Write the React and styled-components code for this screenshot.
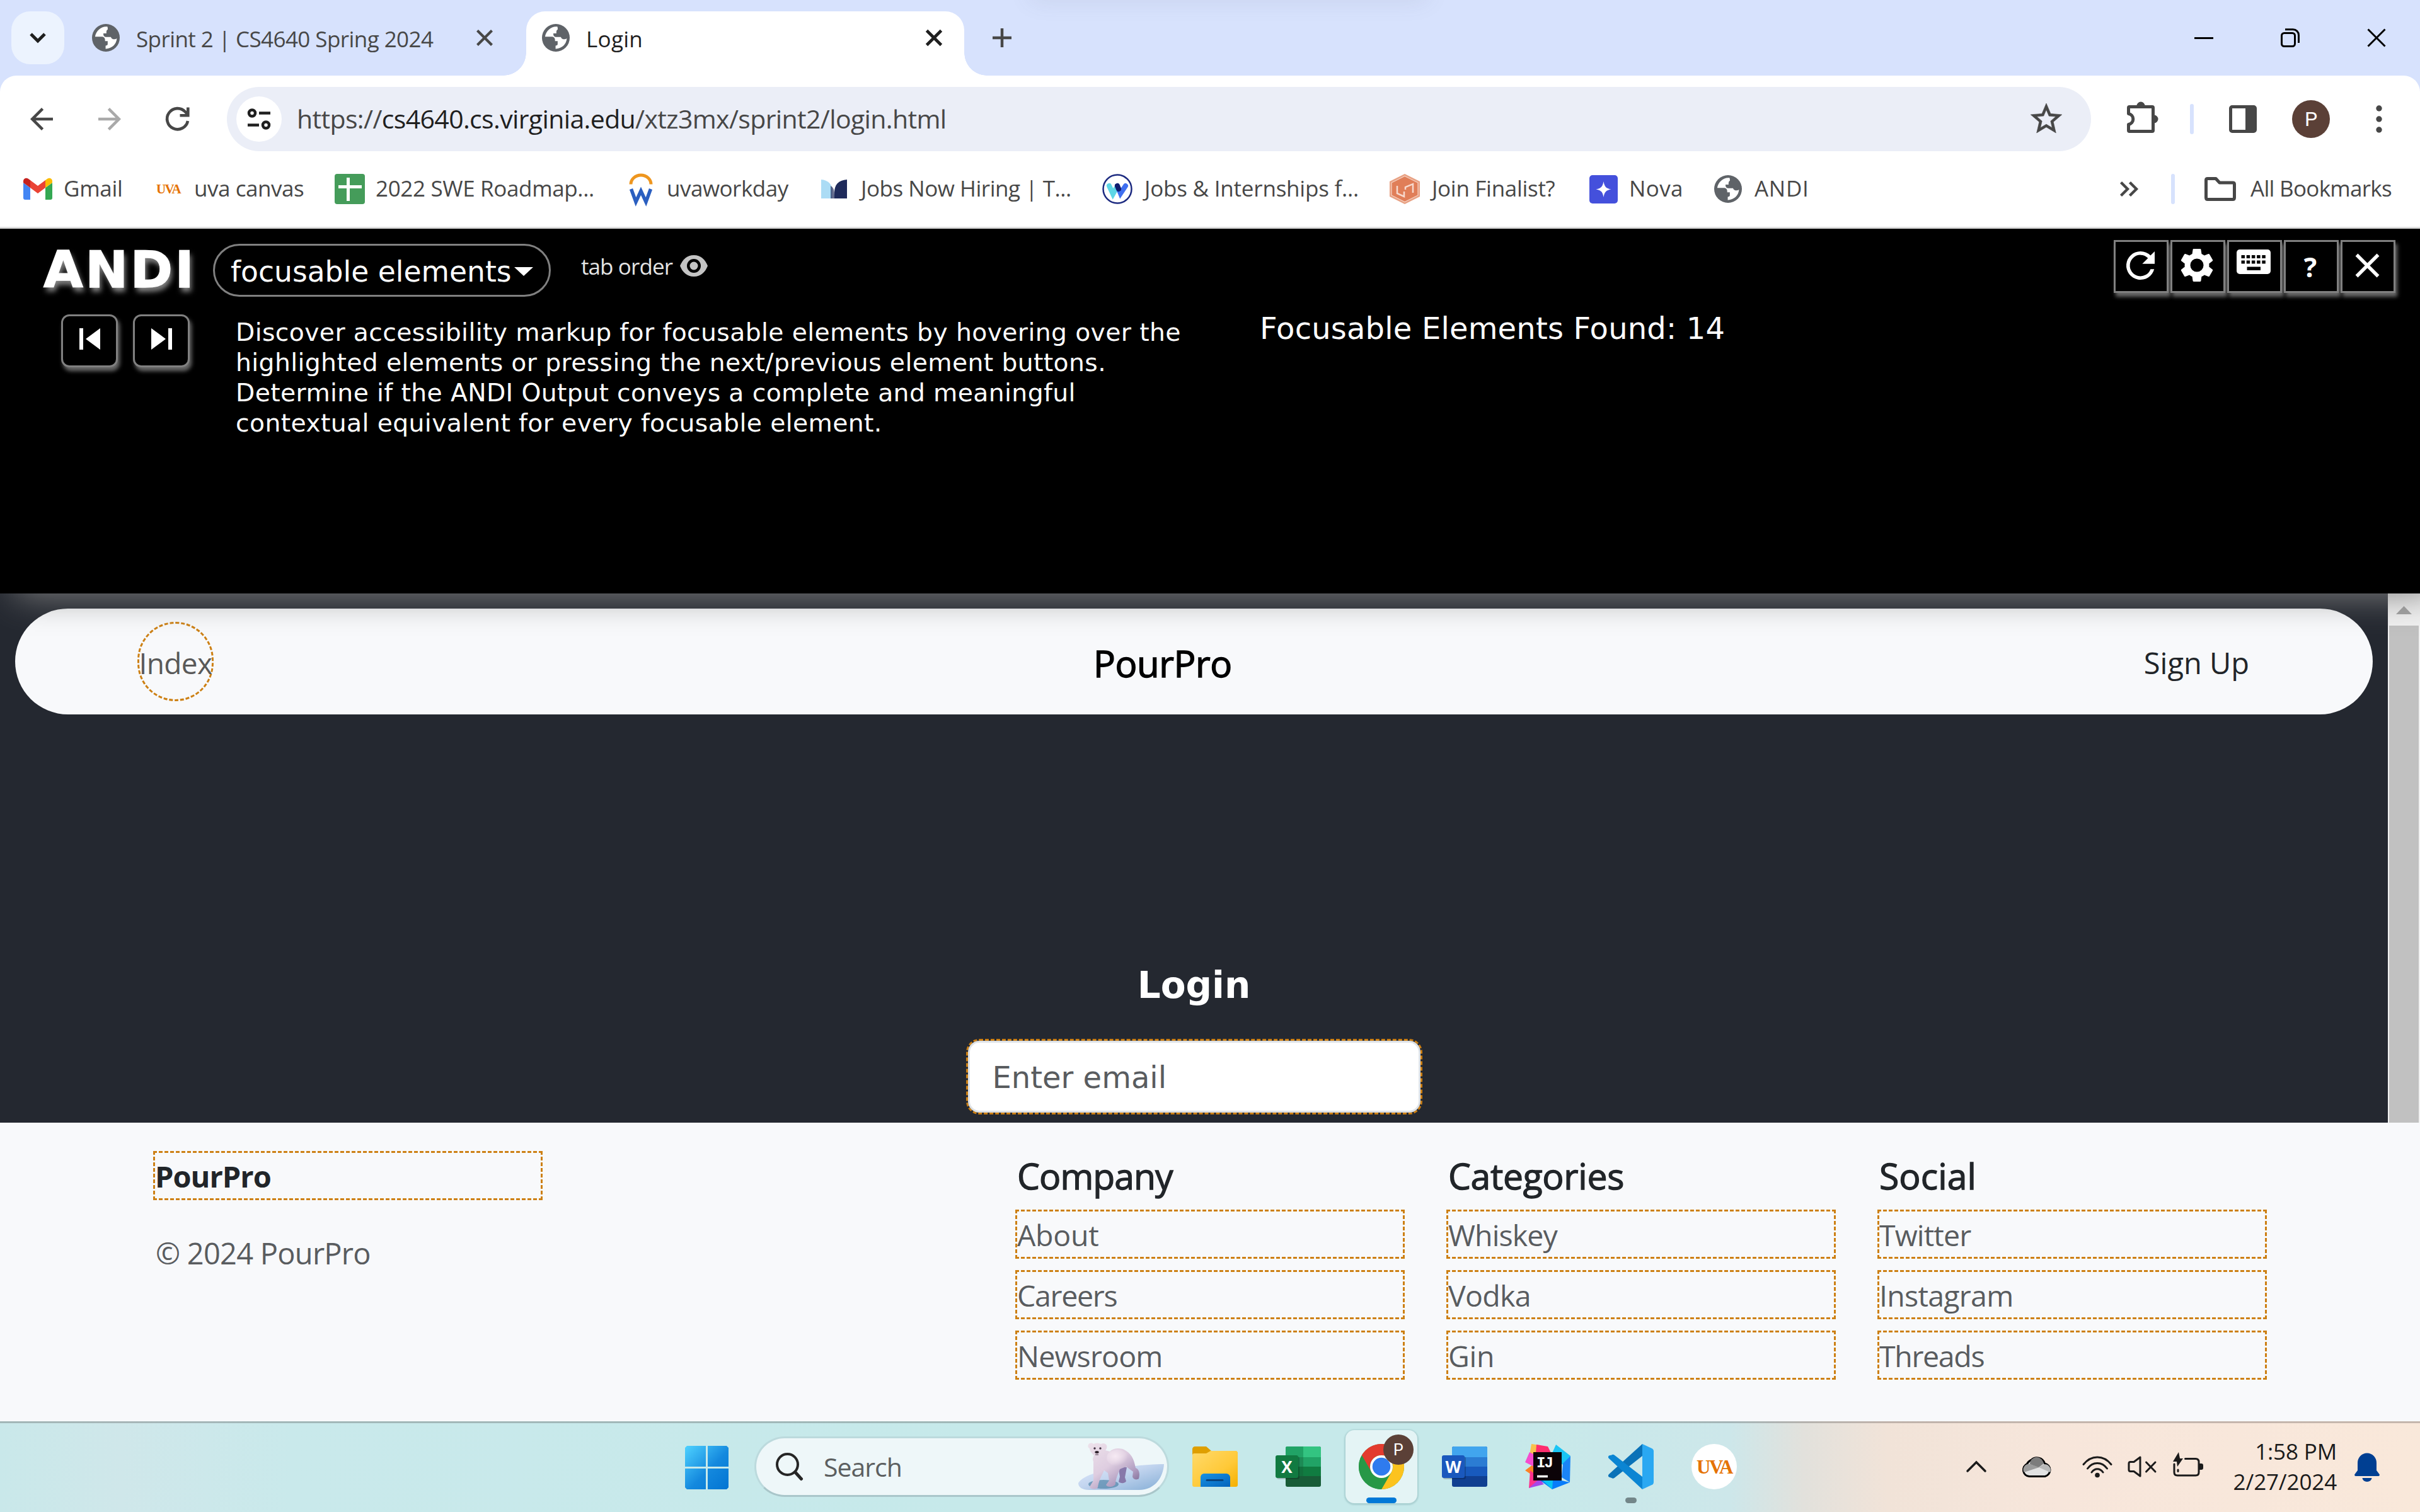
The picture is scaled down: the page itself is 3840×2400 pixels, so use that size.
import React from 'react';
import styled, { createGlobalStyle, css } from 'styled-components';

const UI = '"Open Sans", "Noto Sans", sans-serif';
const VERDANA = '"DejaVu Sans", sans-serif';
const ORANGE = '#cd8014';
const INK = '#474747';

const GlobalStyle = createGlobalStyle`
  *, *::before, *::after { box-sizing: border-box; }
  body { margin: 0; background: #f8f9fb; font-family: ${UI}; overflow: hidden; }
  a { color: inherit; text-decoration: none; }
  button { background: none; border: 0; padding: 0; margin: 0; color: inherit; font: inherit; }
`;

const Screen = styled.div`
  width: 3840px;
  height: 2400px;
  display: flex;
  flex-direction: column;
  overflow: hidden;
`;

const Svg = styled.svg`
  display: block;
  flex: none;
  width: ${(p) => p.$w}px;
  height: ${(p) => p.$h || p.$w}px;
  margin-left: ${(p) => p.$ml || 0}px;
  margin-top: ${(p) => p.$mt || 0}px;
  overflow: visible;
`;

/* ---------- browser chrome ---------- */

const TabStrip = styled.header`
  position: relative;
  height: 120px;
  flex: none;
  background: #d7e2fd;
  display: flex;
  align-items: flex-start;
  padding: 18px 54px 0 18px;
`;

const TopGlow = styled.span`
  position: absolute;
  left: 1640px;
  top: -24px;
  width: 620px;
  height: 20px;
  box-shadow: 0 0 36px 4px rgba(90, 90, 110, 0.13);
`;

const TabSearch = styled.button`
  width: 84px;
  height: 84px;
  border-radius: 30px;
  background: #ecf3fe;
  display: grid;
  place-items: center;
`;

const Tab = styled.div`
  position: relative;
  display: flex;
  align-items: center;
  width: ${(p) => p.$w}px;
  height: ${(p) => (p.$active ? 102 : 84)}px;
  padding: 0 ${(p) => p.$pr}px ${(p) => (p.$active ? 18 : 0)}px ${(p) => p.$pl}px;
  color: ${(p) => (p.$active ? '#1f1f1f' : INK)};
  ${(p) =>
    p.$active &&
    css`
      background: #fff;
      border-radius: 30px 30px 0 0;
      &::before,
      &::after {
        content: '';
        position: absolute;
        bottom: 0;
        width: 36px;
        height: 36px;
      }
      &::before {
        left: -36px;
        background: radial-gradient(circle at 0 0, transparent 35.5px, #fff 36px);
      }
      &::after {
        right: -36px;
        background: radial-gradient(circle at 100% 0, transparent 35.5px, #fff 36px);
      }
    `}
`;

const TabTitle = styled.span`
  flex: 1;
  margin-left: ${(p) => p.$ml}px;
  padding-top: 3px;
  font-size: 35px;
  line-height: 48px;
  letter-spacing: ${(p) => p.$ls}px;
  white-space: nowrap;
`;

const WindowButtons = styled.div`
  margin-left: auto;
  height: 84px;
  display: flex;
  align-items: center;
  gap: 107px;
`;

const ToolbarBack = styled.div`
  flex: none;
  background: #d7e2fd;
`;

const Toolbar = styled.div`
  height: 120px;
  background: #fff;
  border-radius: 26px 26px 0 0;
  display: flex;
  align-items: center;
  padding: 18px 0 0 48px;
  color: ${INK};
`;

const AddressBar = styled.div`
  width: 2958px;
  height: 102px;
  margin: 0 57px 0 59px;
  border-radius: 51px;
  background: #ebeef7;
  display: flex;
  align-items: center;
  padding: 0 46px 0 15px;
`;

const SiteInfo = styled.span`
  width: 72px;
  height: 72px;
  border-radius: 50%;
  background: #fff;
  display: grid;
  place-items: center;
`;

const Url = styled.span`
  flex: 1;
  margin-left: 24px;
  margin-top: -3px;
  font-size: 41px;
  line-height: 60px;
  letter-spacing: -0.63px;
  white-space: nowrap;
  b { font-weight: 400; color: #1f1f1f; }
`;

const Rule = styled.span`
  width: 6px;
  height: 48px;
  border-radius: 3px;
  background: #d7e2fd;
  margin-left: ${(p) => p.$ml}px;
`;

const Avatar = styled.span`
  width: ${(p) => p.$size}px;
  height: ${(p) => p.$size}px;
  margin-left: ${(p) => p.$ml || 0}px;
  border-radius: 50%;
  background: #5b4037;
  color: #fff;
  display: grid;
  place-items: center;
  font: ${(p) => p.$font}px/1 Roboto, sans-serif;
`;

const BookmarkBar = styled.nav`
  flex: none;
  height: 123px;
  background: #fff;
  border-bottom: 3px solid #dedede;
  display: flex;
  align-items: center;
  padding-left: 36px;
  color: ${INK};
`;

const Bookmark = styled.a`
  display: flex;
  align-items: center;
  width: ${(p) => p.$w}px;
`;

const BookmarkIcon = styled.span`
  width: 48px;
  height: 48px;
  display: grid;
  place-items: center;
`;

const BookmarkLabel = styled.span`
  margin-left: ${(p) => p.$ml || 17}px;
  margin-top: -2px;
  font-size: 35px;
  line-height: 48px;
  letter-spacing: ${(p) => p.$ls || 0}px;
  white-space: nowrap;
`;

const UvaMark = styled.span`
  font-family: "Liberation Serif", serif;
  font-weight: 700;
  font-size: ${(p) => p.$size}px;
  line-height: 1;
  letter-spacing: ${(p) => p.$ls}px;
  color: #e57200;
`;

/* ---------- ANDI panel ---------- */

const AndiPanel = styled.section`
  position: relative;
  z-index: 2;
  flex: none;
  height: 579px;
  background: #000;
  color: #fff;
  font-family: ${VERDANA};
  box-shadow: 24px 2px 54px #808080;
  clip-path: inset(0 0 -200px 0);
`;

const AndiTop = styled.div`
  display: flex;
  align-items: flex-start;
  height: 136px;
  padding: 18px 39px 0 69px;
`;

const AndiLogo = styled.h1`
  margin: 0;
  width: 269px;
  padding-top: 1px;
  font-size: 81px;
  line-height: 93px;
  font-weight: 700;
  letter-spacing: 3.6px;
  -webkit-text-stroke: 1.5px #fff;
  text-shadow: 3px 7px 9px #888;
`;

const ModuleSelect = styled.button`
  margin-top: 6px;
  width: 536px;
  height: 84px;
  border: 3px solid #808080;
  border-radius: 42px;
  display: flex;
  align-items: center;
  padding: 4px 0 0 25px;
  font-family: ${VERDANA};
  font-size: 45.6px;
  white-space: nowrap;
`;

const TabOrder = styled.span`
  margin: 17px 0 0 48px;
  display: flex;
  align-items: center;
  color: #e4e4e4;
  font-family: ${UI};
  font-size: 35px;
  line-height: 50px;
  letter-spacing: -0.9px;
`;

const AndiTools = styled.div`
  margin-left: auto;
  display: flex;
  gap: 3px;
`;

const AndiButton = styled.button`
  width: ${(p) => p.$w}px;
  height: 84px;
  border: 3px solid #808080;
  border-radius: ${(p) => p.$r || 0}px;
  box-shadow: 3px 6px 6px #6a6a6a;
  background: #000;
  display: flex;
  align-items: center;
  justify-content: center;
  padding-right: ${(p) => p.$pr || 0}px;
  font: 700 43px/1 ${UI};
`;

const AndiBody = styled.div`
  display: flex;
  align-items: flex-start;
  padding-left: 97px;
`;

const StepButtons = styled.div`
  display: flex;
  gap: 24px;
`;

const Instructions = styled.p`
  margin: 5px 0 0 73px;
  width: 1625px;
  font-size: 39.3px;
  line-height: 48px;
  letter-spacing: 0.38px;
  white-space: pre;
`;

const FoundCount = styled.p`
  margin: -6px 0 0;
  font-size: 48px;
  line-height: 56px;
  letter-spacing: 0.18px;
`;

/* ---------- web page ---------- */

const Page = styled.div`
  flex: none;
  height: 840px;
  display: flex;
`;

const Main = styled.main`
  flex: 1;
  background: #242830;
  padding: 24px 24px 0;
  display: flex;
  flex-direction: column;
  align-items: center;
`;

const NavBar = styled.nav`
  align-self: stretch;
  height: 168px;
  border-radius: 84px;
  background: #f8f9fb;
  display: flex;
  align-items: center;
  padding: 0 196px 0 194px;
  font-size: 47px;
  color: #212529;
`;

const IndexLink = styled.a`
  width: 121px;
  height: 126px;
  border: 3px dashed ${ORANGE};
  border-radius: 61px;
  display: flex;
  align-items: center;
  justify-content: center;
  padding-top: 4px;
  color: #595959;
  font-size: 46px;
  letter-spacing: -0.6px;
`;

const Brand = styled.span`
  margin: 5px auto 0 1396px;
  font-size: 58px;
  color: #000;
  letter-spacing: -0.4px;
  -webkit-text-stroke: 1.4px #000;
`;

const SignUp = styled.a`
  padding-top: 4px;
`;

const LoginTitle = styled.h2`
  margin: 391px 0 46px;
  font: 700 58px/78px ${VERDANA};
  color: #fff;
`;

const EmailField = styled.div`
  width: 724px;
  height: 120px;
  border: 3px dashed ${ORANGE};
  border-radius: 21px;
  flex: none;
`;

const EmailInput = styled.div`
  height: 100%;
  border: 3px solid #dee2e6;
  border-radius: 18px;
  background: #fff;
  padding: 2px 0 0 36px;
  display: flex;
  align-items: center;
  font-family: ${VERDANA};
  font-size: 48px;
  color: #595c5f;
`;

const Scrollbar = styled.div`
  width: 51px;
  background: #f1f1f1;
  padding: 20px 2px 0;
  display: flex;
  flex-direction: column;
  align-items: center;
`;

const ScrollThumb = styled.div`
  margin-top: 18px;
  flex: 1;
  align-self: stretch;
  background: #c1c1c1;
`;

const Footer = styled.footer`
  flex: none;
  height: 474px;
  background: #f8f9fb;
  padding: 45px 243px 0;
  display: grid;
  grid-template-columns: repeat(5, 618px);
  column-gap: 66px;
  align-items: start;
`;

const FooterColumn = styled.div`
  grid-column: ${(p) => p.$col};
  display: flex;
  flex-direction: column;
  gap: 18px;
`;

const FooterHeading = styled.h3`
  margin: 0 0 -3px;
  padding-left: 3px;
  font-size: 57px;
  line-height: 78px;
  font-weight: 400;
  letter-spacing: ${(p) => p.$ls}px;
  color: #212529;
  -webkit-text-stroke: 1.3px #212529;
`;

const FooterLink = styled.a`
  display: block;
  height: 78px;
  border: 3px dashed ${ORANGE};
  padding-top: 1px;
  font-size: ${(p) => (p.$strong ? 47 : 46.5)}px;
  line-height: 72px;
  font-weight: ${(p) => (p.$strong ? 700 : 400)};
  letter-spacing: ${(p) => (p.$strong ? -1 : p.$ls)}px;
  color: ${(p) => (p.$strong ? '#212529' : '#595c5f')};
`;

const Copyright = styled.p`
  margin: 30px 0 0 4px;
  font-size: 47px;
  line-height: 72px;
  letter-spacing: -0.75px;
  color: #595c5f;
`;

/* ---------- taskbar ---------- */

const Taskbar = styled.div`
  flex: none;
  height: 144px;
  border-top: 3px solid rgba(60, 50, 50, 0.27);
  background: linear-gradient(90deg, #c9e8ea 0, #cfe7ea 5%, #c9e9eb 12%, #c6e9ea 40%, #c6e9ea 62%, #cde7ea 71.5%, #e2e1dc 74.5%, #f1e3d8 78%, #f7e6db 85%, #f9e8da 100%);
  background-origin: border-box;
  display: flex;
  align-items: center;
  padding: 0 0 3px 1087px;
  color: #1b1b1b;
`;

const SearchBox = styled.div`
  width: 658px;
  height: 96px;
  margin: 0 16px 0 41px;
  border: 3px solid #bcdadd;
  border-bottom-color: #a9c6ca;
  border-radius: 48px;
  background: #eef7f9;
  display: flex;
  align-items: center;
  padding: 0 5px 0 31px;
  overflow: hidden;
`;

const SearchText = styled.span`
  flex: 1;
  margin-left: 33px;
  font-size: 41px;
  letter-spacing: -1px;
  color: #5c5f60;
`;

const Apps = styled.div`
  display: flex;
  gap: 18px;
`;

const AppSlot = styled.div`
  position: relative;
  width: 114px;
  height: 116px;
  border-radius: 14px;
  display: grid;
  place-items: center;
  ${(p) => p.$active && 'background: #e4f4f5; box-shadow: 0 1px 2px 2px rgba(90,140,145,.25);'}
`;

const Indicator = styled.span`
  position: absolute;
  bottom: 0;
  left: calc(50% - ${(p) => p.$w / 2}px);
  width: ${(p) => p.$w}px;
  height: 9px;
  border-radius: 5px;
  background: ${(p) => p.$c};
`;

const AppBadge = styled.span`
  position: absolute;
  top: 7px;
  right: 6px;
  display: flex;
`;

const UvaDisc = styled.span`
  width: 72px;
  height: 72px;
  border-radius: 50%;
  background: #fff;
  display: grid;
  place-items: center;
`;

const Clock = styled.div`
  width: 213px;
  text-align: right;
  font-size: 35px;
  line-height: 48px;
  padding-right: 1px;
  letter-spacing: -0.15px;
`;

const Tray = styled.div`
  margin-left: 343px;
  flex: none;
  display: flex;
  align-items: center;
`;

/* ---------- drawings ---------- */

const Globe = ({ size = 44, ...rest }) => (
  <Svg $w={size} viewBox="2 2 20 20" {...rest}>
    <circle cx="12" cy="12" r="10" fill="#5f6368" />
    <path
      fill="#fff"
      d="M13.2 4C8.9 3.4 4.9 6.8 4.2 11.2H8.8c1.7 0 2.6.8 2.6 2.3v.9h1.9v2.2c0 .9-.7 1-1.5 1.1v2.2c4.2.1 7.9-3.1 8.1-7.4-1.4.9-3.7.8-4.3-1.1h-3.4c-1.3 0-2.1-.9-2-2.6h2.2c-.1-1.9.3-2.4 1-2.8z"
    />
  </Svg>
);

const Cross = ({ size, sw, ...rest }) => (
  <Svg $w={size} viewBox={`0 0 ${size} ${size}`} fill="none" stroke="currentColor" strokeWidth={sw} {...rest}>
    <path d={`M1.5 1.5L${size - 1.5} ${size - 1.5}M${size - 1.5} 1.5L1.5 ${size - 1.5}`} />
  </Svg>
);

const ReloadIcon = (props) => (
  <Svg viewBox="4 4 16 16" fill="currentColor" {...props}>
    <path d="M17.65 6.35A7.96 7.96 0 0 0 12 4a8 8 0 1 0 7.73 10h-2.08A6 6 0 1 1 12 6c1.66 0 3.14.69 4.22 1.78L13 11h7V4l-2.35 2.35z" />
  </Svg>
);

const ChromeReload = () => (
  <Svg $w={38} $ml={71} viewBox="0 0 38 38" fill="none" stroke="currentColor" strokeWidth="4.6">
    <path d="M35 22A16.6 16.6 0 1 1 31 7.5L35 12" />
    <path d="M35.3 .5V13.200H22.500" />
  </Svg>
);

const GmailIcon = () => (
  <Svg $w={46} $h={34} viewBox="0 0 46 34">
    <path fill="#4285f4" d="M3 34h8V15L0 7v24c0 2 1 3 3 3z" />
    <path fill="#34a853" d="M35 34h8c2 0 3-1 3-3V7l-11 8z" />
    <path fill="#fbbc04" d="M35 3v12l11-8V4.500c0-4-4.500-6-7.500-4z" />
    <path fill="#ea4335" d="M11 15V3l12 9 12-9v12l-12 9z" />
    <path fill="#c5221f" d="M0 4.500V7l11 8V3L7.500.5C4.500-1.500 0 .5 0 4.500z" />
  </Svg>
);

const SheetIcon = () => (
  <Svg $w={48} viewBox="0 0 48 48">
    <rect width="48" height="48" rx="4" fill="#459c5a" />
    <path d="M21.500 6V43M6 20.500H43" stroke="#fff" strokeWidth="5" />
  </Svg>
);

const WorkdayIcon = () => (
  <Svg $w={38} $h={48} viewBox="0 0 38 48" fill="none">
    <path d="M3 16.500a16 14.500 0 0 1 32 0" stroke="#ee961f" strokeWidth="5" />
    <path d="M3.500 24L11 44.500 19 27l8 17.500L34.500 24" stroke="#2b5fc0" strokeWidth="5.500" />
  </Svg>
);

const HiringIcon = () => (
  <Svg $w={41} $h={30} viewBox="0 0 41 30">
    <path fill="#abdcf5" d="M0 0c11 1 17 7 17 16v14H0z" />
    <path fill="#1f2b5b" d="M41 0C27 1 21 9 21 20v10h20z" />
    <path fill="#1f2b5b" opacity=".7" d="M15 10c6 3 6 10 6 20h-6z" />
  </Svg>
);

const WayUpIcon = () => (
  <Svg $w={48} viewBox="0 0 48 48" fill="none" strokeLinecap="round">
    <circle cx="24" cy="24" r="22.500" stroke="#1c2a80" strokeWidth="2.500" fill="#fff" />
    <path d="M11 19l6 13 5-9" stroke="#5ed6e6" strokeWidth="8" />
    <path d="M24 19l5 12 8-12" stroke="#3f6ff0" strokeWidth="8" />
    <path d="M24 19l2 5" stroke="#101c6e" strokeWidth="8" />
  </Svg>
);

const FinalistIcon = () => (
  <Svg $w={48} viewBox="0 0 48 48" fill="none">
    <path d="M24 0L48 12V36L24 48 0 36V12z" fill="#e8a183" />
    <path d="M24 3.500L45 14V34L24 44.500 3 34V14z" fill="#e07e58" stroke="#f6d3c4" strokeWidth="1.200" />
    <path d="M12 19v12l11 5V28M25 25v-4l12-5v14" stroke="#f7d9cd" strokeWidth="2.500" />
  </Svg>
);

const NovaIcon = () => (
  <Svg $w={45} viewBox="0 0 45 45">
    <rect width="45" height="45" rx="5" fill="#4450dc" />
    <path fill="#fff" d="M22.500 10c1.500 8.500 4 11 12 12.500-8 1.500-10.500 4-12 12.500-1.500-8.500-4-11-12-12.500 8-1.500 10.500-4 12-12.500z" />
  </Svg>
);

const PolarBear = () => (
  <Svg $w={136} $h={76} viewBox="0 0 136 76">
    <defs>
      <linearGradient id="ice" x1="0" y1="0" x2="1" y2="1">
        <stop offset="0" stopColor="#dfe9fc" />
        <stop offset=".45" stopColor="#c3d5ef" />
        <stop offset="1" stopColor="#85aed6" />
      </linearGradient>
      <linearGradient id="fur" x1=".1" y1="0" x2=".9" y2="1">
        <stop offset="0" stopColor="#ece0ea" />
        <stop offset=".45" stopColor="#decde0" />
        <stop offset=".75" stopColor="#b09dc0" />
        <stop offset="1" stopColor="#75648f" />
      </linearGradient>
      <radialGradient id="hump" cx=".4" cy=".4" r=".6">
        <stop offset="0" stopColor="#f6eaf3" />
        <stop offset="1" stopColor="#f6eaf3" stopOpacity="0" />
      </radialGradient>
    </defs>
    <path fill="url(#ice)" d="M0 64C10 48 50 42 82 38c22-3 40-4 54-4-1 18-12 41-40 41H17C7 75 0 71 0 64z" />
    <ellipse cx="40" cy="66" rx="24" ry="7" fill="#41799e" opacity=".6" />
    <path fill="#8778aa" d="M63 36l14 3-3 16 2 6c-2 4-9 4-12 1l2-8z" />
    <path
      fill="url(#fur)"
      d="M16 3c2-3 6-3 8-1q6-3 12 0c3-2 7-1 9 2 1 3 0 6-2 8l7 2C56 8 68 7 76 13c11 7 13 18 15 27 6 2 7 10 5 17-4 3-9 1-10-3l1-8-11-8-10 4c-3 8-7 16-7 24-3 5-13 5-15 1l5-7-2-12-6-4c-5 10-9 18-10 27-3 4-12 3-13-1l6-10V30c-2-4 0-8 1-10-5-4-7-8-7-11-3-1-3-4-2-6z"
    />
    <ellipse cx="62" cy="24" rx="17" ry="13" fill="url(#hump)" />
    <circle cx="26" cy="9" r="1.700" fill="#453646" />
    <circle cx="35" cy="9" r="1.700" fill="#453646" />
    <ellipse cx="29.500" cy="15" rx="3.200" ry="2" fill="#30242e" />
    <path d="M27 19h5" stroke="#6a5666" strokeWidth="1.300" />
  </Svg>
);

const WindowsLogo = () => (
  <Svg $w={69} viewBox="0 0 69 69" $mt={3}>
    <defs>
      <linearGradient id="win" x1="0" y1="0" x2="1" y2="1">
        <stop offset="0" stopColor="#4fd2ff" />
        <stop offset=".55" stopColor="#1489de" />
        <stop offset="1" stopColor="#0274d2" />
      </linearGradient>
    </defs>
    <path fill="url(#win)" d="M3 0h30v33H0V3zM36 0h30l3 3v30H36zM0 36h33v33H3l-3-3zM36 36h33v30l-3 3H36z" />
  </Svg>
);

const ExplorerIcon = () => (
  <Svg $w={72} $h={64} viewBox="0 0 72 64">
    <defs>
      <linearGradient id="fold" x1="0" y1="0" x2="1" y2="1">
        <stop offset="0" stopColor="#ffda6b" />
        <stop offset=".6" stopColor="#ffc938" />
        <stop offset="1" stopColor="#f5b000" />
      </linearGradient>
      <linearGradient id="foldb" x1="0" y1="0" x2="1" y2="1">
        <stop offset="0" stopColor="#1792e4" />
        <stop offset="1" stopColor="#0463bb" />
      </linearGradient>
    </defs>
    <path fill="#df9f00" d="M0 4c0-2 2-4 4-4h18l8 7h38c2 0 4 2 4 4v8H0z" />
    <path fill="url(#fold)" d="M0 14c0-2 1-3 3-3h19l7-4h40c2 0 3 2 3 4v50c0 2-1 3-3 3H3c-2 0-3-1-3-3z" />
    <path fill="url(#foldb)" d="M13 64V49c0-4 3-6 6-6h35c3 0 6 3 6 6v15z" />
    <path d="M23 53.500h25" stroke="#07437f" strokeWidth="3" strokeLinecap="round" />
  </Svg>
);

const officeText = { fill: '#fff', fontFamily: 'Open Sans, sans-serif', fontWeight: 700, textAnchor: 'middle' };

const OfficeIcon = ({ letter, bands, badge, split }) => (
  <Svg $w={72} $h={64} viewBox="0 0 72 64">
    <rect x="16" y="0" width="56" height="64" rx="3" fill={bands[3]} />
    <path d="M16 3c0-2 1-3 3-3h50c2 0 3 1 3 3v14H16z" fill={bands[0]} />
    <path d="M16 17h56v15H16z" fill={bands[1]} />
    <path d="M16 32h56v15H16z" fill={bands[2]} />
    {split && <path d="M16 3c0-2 1-3 3-3h25v17H16zM44 17h28v15H44z" fill={bands[1]} />}
    {split && <path d="M16 17h28v30H16z" fill={bands[3]} opacity=".35" />}
    <rect x="2" y="16" width="36" height="36" rx="3" fill="#000" opacity=".2" />
    <rect x="0" y="14" width="36" height="36" rx="3" fill={badge} />
    <text x="18" y="41.500" fontSize="26" {...officeText}>{letter}</text>
  </Svg>
);

const ChromeIcon = () => (
  <Svg $w={72} viewBox="0 0 72 72">
    <circle cx="36" cy="36" r="36" fill="#34a04f" />
    <path fill="#e33b2e" d="M4.800 18A36 36 0 0 1 67.200 18H36a18 18 0 0 0-15.600 27z" />
    <path fill="#fcc31e" d="M67.200 18A36 36 0 0 1 36 72l15.600-27A18 18 0 0 0 36 18z" />
    <path fill="#279847" d="M4.800 18A36 36 0 0 0 36 72l15.600-27H20.400z" />
    <circle cx="36" cy="36" r="18" fill="#fff" />
    <circle cx="36" cy="36" r="14.300" fill="#2f7bee" />
  </Svg>
);

const IntelliJIcon = () => (
  <Svg $w={72} viewBox="0 0 72 72">
    <path fill="#fd8224" d="M0 42l16-12 8 30-12-10z" />
    <path fill="#f9c04c" d="M10 0l14 2-8 22-9-6z" />
    <path fill="#fe2d6e" d="M18 1l18 3 6 12-26 14z" />
    <path fill="#f54ccf" d="M0 29l7-16 12 6-3 18z" />
    <path fill="#ff318c" d="M6 70l2-28 22 18z" />
    <path fill="#a646e8" d="M6 70l16-14 8 8z" />
    <path fill="#19c5f5" d="M49 1l23 18-12 14-20-12z" />
    <path fill="#1b84f5" d="M72 19l-1 42-13-8 2-22z" />
    <path fill="#087cfa" d="M24 58h34l13 3-28 11z" />
    <path fill="#07c3f2" d="M28 58h16l-1 14z" />
    <rect x="13" y="13" width="45" height="45" fill="#0c0308" />
    <path d="M19 51.500h17" stroke="#fff" strokeWidth="3.500" />
    <text x="18" y="36.500" fontSize="24" fontWeight="700" fontFamily="Liberation Mono, monospace" fill="#fff" letterSpacing="-2">IJ</text>
  </Svg>
);

const VsCodeIcon = () => (
  <Svg $w={72} viewBox="0 0 72 72">
    <path fill="#0a72b8" d="M54 0L1 48c-1.500 1.500-1.500 3 0 4.500L5.500 54c1 1 2.500 1 4 0L54 19z" />
    <path fill="#0b85d3" d="M54 72L1 23c-1.500-1.500-1.500-3 0-4.500L5.500 17.500c1-1 2.500-1 4 0L54 52z" />
    <path fill="#2aa8f2" d="M54 0l15 7c2 1 3 2.500 3 4.500v49c0 2-1 3.500-3 4.500l-15 7z" />
  </Svg>
);

const BOOKMARKS = [
  { label: 'Gmail', w: 207, ls: -0.3, icon: <GmailIcon /> },
  { label: 'uva canvas', w: 288, ls: -0.46, icon: <UvaMark $size={21} $ls={-1.6}>UVA</UvaMark> },
  { label: '2022 SWE Roadmap...', w: 462, ls: -0.35, icon: <SheetIcon /> },
  { label: 'uvaworkday', w: 306, ls: -0.5, icon: <WorkdayIcon /> },
  { label: 'Jobs Now Hiring | T...', w: 450, ls: -0.46, ml: 19, icon: <HiringIcon /> },
  { label: 'Jobs & Internships f...', w: 456, ls: -0.21, ml: 19, icon: <WayUpIcon /> },
  { label: 'Join Finalist?', w: 315, ls: -0.3, ml: 19, icon: <FinalistIcon /> },
  { label: 'Nova', w: 198, ls: 0.37, icon: <NovaIcon /> },
  { label: 'ANDI', w: 646, ls: 0.71, ml: 18, icon: <Globe /> },
];

const FOOTER = [
  { title: 'Company', ls: -0.9, links: [['About', -0.3], ['Careers', -1.3], ['Newsroom', -0.85]] },
  { title: 'Categories', ls: -0.3, links: [['Whiskey', -0.9], ['Vodka', -0.7], ['Gin', -0.3]] },
  { title: 'Social', ls: 0.1, links: [['Twitter', -0.9], ['Instagram', -0.75], ['Threads', -1.35]] },
];

export default function App() {
  return (
    <Screen>
      <GlobalStyle />
      <TabStrip>
        <TopGlow />
        <TabSearch>
          <Svg $w={26} $h={16} viewBox="0 0 26 16" fill="none" stroke="#1f1f1f" strokeWidth="5">
            <path d="M2 2l11 11L24 2" />
          </Svg>
        </TabSearch>
        <Tab $w={733} $pl={44} $pr={53}>
          <Globe />
          <TabTitle $ml={26} $ls={-0.57}>Sprint 2 | CS4640 Spring 2024</TabTitle>
          <Cross size={26} sw={4.2} />
        </Tab>
        <Tab $active $w={695} $pl={25} $pr={35}>
          <Globe />
          <TabTitle $ml={26} $ls={0.3}>Login</TabTitle>
          <Cross size={26} sw={4.800} />
        </Tab>
        <Svg $w={30} $ml={45} $mt={27} viewBox="0 0 30 30" stroke={INK} strokeWidth="4.500">
          <path d="M15 0v30M0 15h30" />
        </Svg>
        <WindowButtons>
          <Svg $w={30} viewBox="0 0 30 30" stroke="#000" strokeWidth="3"><path d="M0 15.500h30" /></Svg>
          <Svg $w={30} viewBox="0 0 30 30" fill="none" stroke="#000" strokeWidth="3">
            <rect x="1.500" y="7.500" width="21" height="21" rx="4" />
            <path d="M7 1.800h12.500c5 0 9 4 9 9V23" />
          </Svg>
          <Cross size={30} sw={3} />
        </WindowButtons>
      </TabStrip>

      <ToolbarBack>
        <Toolbar>
          <Svg $w={36} viewBox="4 4 16 16" fill="currentColor">
            <path d="M20 11H7.830l5.590-5.590L12 4l-8 8 8 8 1.410-1.410L7.830 13H20v-2z" />
          </Svg>
          <Svg $w={36} $ml={72} viewBox="4 4 16 16" fill="#a9a9a9">
            <path d="M12 4l-1.410 1.410L16.170 11H4v2h12.170l-5.580 5.590L12 20l8-8z" />
          </Svg>
          <ChromeReload />
          <AddressBar>
            <SiteInfo>
              <Svg $w={36} $h={34} viewBox="0 0 36 34" fill="none" stroke="#1f1f1f" strokeWidth="4.500">
                <circle cx="7" cy="7.500" r="5" />
                <path d="M18 7.500h18M0 26.500h18" />
                <circle cx="29" cy="26.500" r="5" />
              </Svg>
            </SiteInfo>
            <Url>https://<b>cs4640.cs.virginia.edu</b>/xtz3mx/sprint2/login.html</Url>
            <Svg $w={50} $h={47} $mt={-3} viewBox="2 2 20 19" fill="currentColor" stroke="currentColor" strokeWidth=".25">
              <path d="M22 9.240l-7.190-.62L12 2 9.190 8.630 2 9.240l5.460 4.730L5.820 21 12 17.270 18.180 21l-1.630-7.030L22 9.240zM12 15.400l-3.760 2.270 1-4.280-3.320-2.880 4.380-.38L12 6.100l1.710 4.040 4.380.38-3.320 2.880 1 4.280L12 15.400z" />
            </Svg>
          </AddressBar>
          <Svg $w={50} $h={50} $mt={-6} viewBox="0 0 50 50">
            <path
              fill="none"
              stroke={INK}
              strokeWidth="5"
              strokeLinejoin="round"
              d="M4 8.500h36q1.500 0 1.500 1.500v36q0 1.500-1.500 1.500H4q-1.500 0-1.500-1.500V36.500a8.600 8.600 0 0 0 0-17V10q0-1.500 1.500-1.500z"
            />
            <path fill={INK} d="M15.500 7a6.500 6.500 0 0 1 13 0zM43 21.500a6.500 6.500 0 0 1 0 13z" />
          </Svg>
          <Rule $ml={50} />
          <Svg $w={44} $ml={56} viewBox="0 0 44 44">
            <rect x="2.500" y="2.500" width="39" height="39" rx="2.500" fill="none" stroke={INK} strokeWidth="5" />
            <path fill={INK} d="M26 2h16v40H26z" />
          </Svg>
          <Avatar $size={60} $font={32} $ml={56}>P</Avatar>
          <Svg $w={10} $h={44} $ml={73} viewBox="0 0 10 44" fill={INK}>
            <circle cx="5" cy="5" r="4.700" /><circle cx="5" cy="22" r="4.700" /><circle cx="5" cy="39" r="4.700" />
          </Svg>
        </Toolbar>
      </ToolbarBack>

      <BookmarkBar>
        {BOOKMARKS.map((b) => (
          <Bookmark key={b.label} $w={b.w}>
            <BookmarkIcon>{b.icon}</BookmarkIcon>
            <BookmarkLabel $ls={b.ls} $ml={b.ml}>{b.label}</BookmarkLabel>
          </Bookmark>
        ))}
        <Svg $w={29} $h={24} viewBox="0 0 29 24" fill="none" stroke={INK} strokeWidth="4.300">
          <path d="M1.500 1.500L12 12 1.500 22.500M15.500 1.500L26 12 15.500 22.500" />
        </Svg>
        <Rule $ml={52} />
        <Svg $w={50} $h={38} $ml={47} viewBox="0 0 50 38">
          <path fill="none" stroke={INK} strokeWidth="5" strokeLinejoin="round" d="M5 2.500h13l6 6.500h21q2.500 0 2.500 2.500v21q0 3-2.500 3H5q-2.500 0-2.500-3V5q0-2.500 2.500-2.500z" />
        </Svg>
        <BookmarkLabel $ml={23} $ls={-0.71}>All Bookmarks</BookmarkLabel>
      </BookmarkBar>

      <AndiPanel>
        <AndiTop>
          <AndiLogo>ANDI</AndiLogo>
          <ModuleSelect>
            focusable elements
            <Svg $w={30} $h={14} $ml={4} viewBox="0 0 30 14" fill="#fff"><path d="M0 0h30L15 14z" /></Svg>
          </ModuleSelect>
          <TabOrder>
            tab order
            <Svg $w={44} $h={34} $ml={12} $mt={-2} viewBox="0 0 44 34">
              <path fill="#c4c4c4" d="M22 0C11 0 4 7 0 17c4 10 11 17 22 17s18-7 22-17C40 7 33 0 22 0z" />
              <circle cx="22" cy="17" r="11" fill="#000" />
              <circle cx="22" cy="17" r="6.500" fill="#c4c4c4" />
            </Svg>
          </TabOrder>
          <AndiTools>
            <AndiButton $w={87} $pr={3}><ReloadIcon $w={45} $mt={-4} /></AndiButton>
            <AndiButton $w={87} $pr={3}>
              <Svg $w={54} $mt={-4} viewBox="2 2 20 20" fill="#fff">
                <path d="M19.140 12.940c.04-.3.060-.61.060-.94 0-.32-.02-.64-.07-.94l2.030-1.580a.49.49 0 0 0 .12-.61l-1.920-3.320a.488.488 0 0 0-.59-.22l-2.390.96c-.5-.38-1.030-.7-1.620-.94l-.36-2.540a.484.484 0 0 0-.48-.41h-3.840c-.24 0-.43.17-.47.41l-.36 2.540c-.59.24-1.130.57-1.620.94l-2.390-.96c-.22-.08-.47 0-.59.22L2.740 8.870c-.12.21-.08.47.12.61l2.030 1.580c-.05.3-.09.63-.09.94s.02.64.07.94l-2.030 1.580a.49.49 0 0 0-.12.61l1.920 3.320c.12.22.37.29.59.22l2.390-.96c.5.38 1.030.7 1.620.94l.36 2.540c.05.24.24.41.48.41h3.840c.24 0 .44-.17.47-.41l.36-2.540c.59-.24 1.130-.56 1.620-.94l2.390.96c.22.08.47 0 .59-.22l1.920-3.320c.12-.22.070-.47-.12-.61l-2.010-1.580zM12 15.900a3.900 3.900 0 1 1 0-7.800 3.900 3.900 0 0 1 0 7.800z" />
              </Svg>
            </AndiButton>
            <AndiButton $w={87} $pr={3}>
              <Svg $w={54} $h={39} $mt={-15} viewBox="0 0 54 39">
                <rect width="54" height="39" rx="5" fill="#fff" />
                <g fill="#000">
                  {[8, 16.2, 24.4, 32.6, 40.8].map((x) => (
                    <React.Fragment key={x}>
                      <rect x={x - 0.5} y="9" width="5.500" height="5" />
                      <rect x={x - 0.5} y="17.500" width="5.500" height="5" />
                    </React.Fragment>
                  ))}
                  <rect x="16.500" y="27.500" width="21.500" height="5.500" />
                </g>
              </Svg>
            </AndiButton>
            <AndiButton $w={87} $pr={3}>?</AndiButton>
            <AndiButton $w={87} $pr={3}><Cross size={37} sw={5.500} $mt={-3} /></AndiButton>
          </AndiTools>
        </AndiTop>
        <AndiBody>
          <StepButtons>
            <AndiButton $w={90} $r={13}>
              <Svg $w={33} $h={34} $mt={-6} viewBox="0 0 33 34" fill="#fff"><path d="M0 0h6v34H0zM33 0v34L10 17z" /></Svg>
            </AndiButton>
            <AndiButton $w={90} $r={13}>
              <Svg $w={33} $h={34} $mt={-6} viewBox="0 0 33 34" fill="#fff"><path d="M27 0h6v34h-6zM0 0v34l23-17z" /></Svg>
            </AndiButton>
          </StepButtons>
          <Instructions>
            {'Discover accessibility markup for focusable elements by hovering over the\nhighlighted elements or pressing the next/previous element buttons.\nDetermine if the ANDI Output conveys a complete and meaningful\ncontextual equivalent for every focusable element.'}
          </Instructions>
          <FoundCount>Focusable Elements Found: 14</FoundCount>
        </AndiBody>
      </AndiPanel>

      <Page>
        <Main>
          <NavBar>
            <IndexLink>Index</IndexLink>
            <Brand>PourPro</Brand>
            <SignUp>Sign Up</SignUp>
          </NavBar>
          <LoginTitle>Login</LoginTitle>
          <EmailField>
            <EmailInput>Enter email</EmailInput>
          </EmailField>
        </Main>
        <Scrollbar>
          <Svg $w={25} $h={13} viewBox="0 0 25 13" fill="#a0a0a0"><path d="M0 13L12.500 0 25 13z" /></Svg>
          <ScrollThumb />
        </Scrollbar>
      </Page>

      <Footer>
        <FooterColumn $col={1}>
          <FooterLink $strong>PourPro</FooterLink>
          <Copyright>© 2024 PourPro</Copyright>
        </FooterColumn>
        {FOOTER.map((c, i) => (
          <FooterColumn key={c.title} $col={i + 3}>
            <FooterHeading $ls={c.ls}>{c.title}</FooterHeading>
            {c.links.map(([label, ls]) => (
              <FooterLink key={label} $ls={ls}>{label}</FooterLink>
            ))}
          </FooterColumn>
        ))}
      </Footer>

      <Taskbar>
        <WindowsLogo />
        <SearchBox>
          <Svg $w={43} $h={44} viewBox="0 0 43 44" fill="none" stroke="#262626" strokeLinecap="round">
            <circle cx="18.500" cy="18.500" r="16.500" strokeWidth="4" />
            <path d="M30.500 30.500L40.500 41.500" strokeWidth="5" />
          </Svg>
          <SearchText>Search</SearchText>
          <PolarBear />
        </SearchBox>
        <Apps>
          <AppSlot><ExplorerIcon /></AppSlot>
          <AppSlot><OfficeIcon letter="X" split badge="#117a41" bands={['#33c481', '#21a366', '#107c41', '#185c37']} /></AppSlot>
          <AppSlot $active>
            <ChromeIcon />
            <AppBadge><Avatar $size={48} $font={25}>P</Avatar></AppBadge>
            <Indicator $w={48} $c="#0078d7" />
          </AppSlot>
          <AppSlot><OfficeIcon letter="W" badge="#1a58bd" bands={['#41a5ee', '#2b7cd3', '#185abd', '#103f91']} /></AppSlot>
          <AppSlot><IntelliJIcon /></AppSlot>
          <AppSlot><VsCodeIcon /><Indicator $w={18} $c="#738689" /></AppSlot>
          <AppSlot><UvaDisc><UvaMark $size={31} $ls={-2.4}>UVA</UvaMark></UvaDisc></AppSlot>
        </Apps>
        <Tray>
          <Svg $w={32} $h={18} viewBox="0 0 32 18" fill="none" stroke="#1b1b1b" strokeWidth="3.500" strokeLinecap="round"><path d="M2 16L16 2l14 14" /></Svg>
          <Svg $w={48} $h={33} $ml={56} viewBox="0 0 48 33">
            <path fill="#e2e2e2" stroke="#000" strokeWidth="3" d="M12 31.500a10.500 10.500 0 0 1-3.500-20A13 13 0 0 1 15 5.500a13 13 0 0 1 21.500 5.500A10.500 10.500 0 0 1 37 31.500z" />
            <path fill="#9b9b9b" d="M3.500 25A9 9 0 0 1 13 12L28 17z" />
            <path fill="#7c7c7c" d="M13 12a10.500 10.500 0 0 1 21.500-.5L27 17z" />
            <path fill="#b9b9b9" d="M27 17l8-4.500A9 9 0 0 1 45 25z" />
          </Svg>
          <Svg $w={48} $h={35} $ml={48} viewBox="0 0 48 35" fill="none" stroke="#1b1b1b" strokeWidth="3" strokeLinecap="round">
            <path d="M2 13.500C14-2 34-2 46 13.500M8.500 20c8-11.500 23-11.500 31 0M15 26c5-7 13-7 18 0" />
            <circle cx="24" cy="30.500" r="3.800" fill="#1b1b1b" stroke="none" />
          </Svg>
          <Svg $w={48} $h={34} $ml={24} viewBox="0 0 48 34" fill="none" stroke="#1b1b1b" strokeWidth="3" strokeLinecap="round" strokeLinejoin="round">
            <path d="M2 12q0-2.500 2.500-2.500H10L20 2v30l-10-7.500H4.500Q2 24.500 2 22zM29.500 10L44 25M44 10L29.500 25" />
          </Svg>
          <Svg $w={48} $h={39} $ml={24} $mt={-7} viewBox="0 0 48 39">
            <path fill="none" stroke="#1b1b1b" strokeWidth="3" strokeLinecap="round" d="M19.500 10.500H36q5 0 5 5V32q0 5-5 5H7q-5 0-5-5V19M8 28v2.500" />
            <path fill="#1b1b1b" d="M41 18h4q3 0 3 3v4q0 3-3 3h-4zM9 0L0 15h6l1 8 9-13h-5z" />
          </Svg>
          <Clock>1:58 PM<br />2/27/2024</Clock>
          <Svg $w={40} $h={46} $ml={27} $mt={2} viewBox="0 0 40 46" fill="#003f92">
            <path d="M5 16a15 15.500 0 0 1 30 0v12l4.500 6c1 1.500 0 3-1.500 3H2c-1.500 0-2.500-1.500-1.500-3L5 28zM12.500 40h15a7.500 6 0 0 1-15 0z" />
          </Svg>
        </Tray>
      </Taskbar>
    </Screen>
  );
}
